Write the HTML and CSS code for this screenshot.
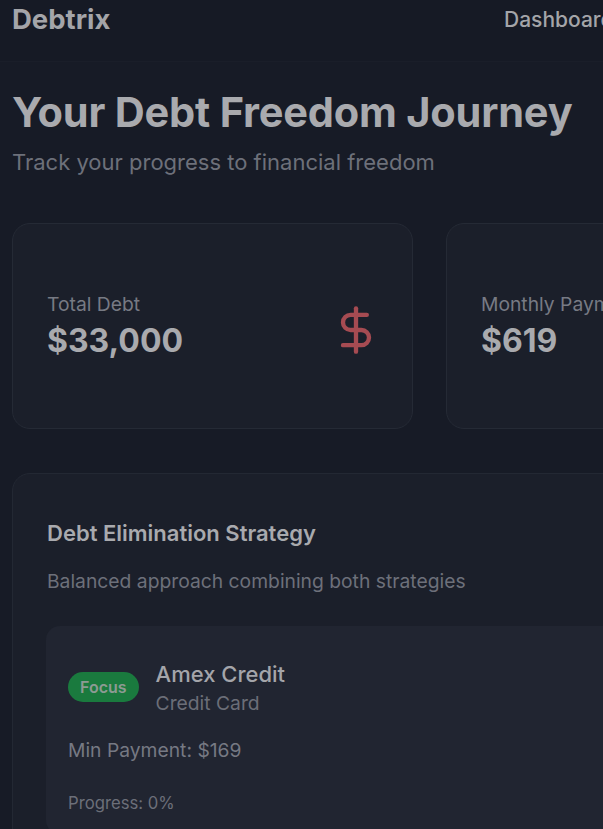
FILE: index.html
```html
<!DOCTYPE html>
<html lang="en">
<head>
<meta charset="utf-8">
<title>Debtrix</title>
<link rel="stylesheet" href="styles.css">
</head>
<body>
<div class="page">
  <header class="topbar">
    <div class="brand">Debtrix</div>
    <nav class="nav"><a class="nav-link">Dashboard</a><a class="nav-link">Debts</a><a class="nav-link">Plan</a></nav>
  </header>
  <main class="main">
    <h1 class="title">Your Debt Freedom Journey</h1>
    <p class="subtitle">Track your progress to financial freedom</p>

    <section class="stats">
      <div class="stat-card">
        <div class="stat-text">
          <div class="stat-label">Total Debt</div>
          <div class="stat-value">$33,000</div>
        </div>
        <svg class="stat-icon" width="52" height="52" viewBox="0 0 24 24" fill="none" stroke="currentColor" stroke-width="2" stroke-linecap="round" stroke-linejoin="round"><line x1="12" y1="2" x2="12" y2="22"/><path d="M17 5H9.5a3.5 3.5 0 0 0 0 7h5a3.5 3.5 0 0 1 0 7H6"/></svg>
      </div>
      <div class="stat-card">
        <div class="stat-text">
          <div class="stat-label">Monthly Payment</div>
          <div class="stat-value">$619</div>
        </div>
      </div>
      <div class="stat-card">
        <div class="stat-text">
          <div class="stat-label">Debt Free Date</div>
          <div class="stat-value">2029</div>
        </div>
      </div>
    </section>

    <section class="strategy">
      <h2 class="strategy-title">Debt Elimination Strategy</h2>
      <p class="strategy-desc">Balanced approach combining both strategies</p>
      <div class="debt-item">
        <div class="debt-head">
          <span class="badge">Focus</span>
          <div class="debt-name-block">
            <div class="debt-name">Amex Credit</div>
            <div class="debt-type">Credit Card</div>
          </div>
        </div>
        <div class="debt-min">Min Payment: $169</div>
        <div class="debt-progress">Progress: 0%</div>
      </div>
    </section>
  </main>
</div>
</body>
</html>
```

FILE: styles.css
```css
html, body {
  margin: 0;
  padding: 0;
  overflow: hidden;
  background: #171b26;
}
body {
  font-family: Inter, "Noto Sans", "Liberation Sans", sans-serif;
  color: #a9aaae;
}
.page {
  width: 1400px;
}
.topbar {
  height: 62px;
  box-sizing: border-box;
  display: flex;
  align-items: flex-start;
  padding: 2px 12px 0 12px;
  border-bottom: 1px solid #1a1e29;
  background: #161a25;
}
.brand {
  font-size: 27.5px;
  font-weight: 700;
  color: #a4a5a9;
  line-height: 34px;
  width: 492px;
}
.nav {
  display: flex;
  gap: 32px;
}
.nav-link {
  font-size: 21px;
  font-weight: 500;
  color: #a4a5a9;
  line-height: 36px;
}
.main {
  padding: 0 12px;
}
.title {
  margin: 26px 0 0 0;
  font-size: 41.5px;
  font-weight: 700;
  line-height: 48px;
  color: #a9aaae;
  letter-spacing: -0.2px;
}
.subtitle {
  margin: 11px 0 0 0;
  font-size: 22px;
  line-height: 30px;
  color: #6d707a;
}
.stats {
  margin-top: 46px;
  display: grid;
  grid-template-columns: 401px 401px 401px;
  gap: 33px;
}
.stat-card {
  box-sizing: border-box;
  height: 206px;
  padding: 0 34px;
  border: 1px solid #252a35;
  border-radius: 18px;
  background: #1b1f2a;
  display: flex;
  align-items: center;
  justify-content: space-between;
}
.stat-label {
  font-size: 19.3px;
  line-height: 26px;
  color: #777a84;
}
.stat-value {
  margin-top: 4px;
  font-size: 32px;
  font-weight: 700;
  line-height: 40px;
  color: #a9aaae;
}
.stat-icon {
  color: #a64b52;
  margin-right: -4px;
  margin-top: 8px;
}
.strategy {
  margin-top: 44px;
  box-sizing: border-box;
  width: 1300px;
  padding: 44px 34px 40px 34px;
  border: 1px solid #232833;
  border-radius: 18px;
  background: #1b1f2a;
}
.strategy-title {
  margin: 0;
  font-size: 22px;
  font-weight: 600;
  line-height: 30px;
  color: #a9aaae;
}
.strategy-desc {
  margin: 20px 0 0 0;
  font-size: 19.3px;
  line-height: 26px;
  color: #6d707a;
}
.debt-item {
  margin-top: 32px;
  margin-left: -1px;
  padding: 32px 22px 20px 22px;
  border-radius: 14px;
  background: #212531;
}
.debt-head {
  display: flex;
  align-items: center;
  gap: 17px;
}
.badge {
  display: inline-block;
  height: 30px;
  line-height: 30px;
  padding: 0 12px;
  border-radius: 15px;
  background: #1a7a3e;
  color: #8d9a93;
  font-size: 16px;
  font-weight: 600;
}
.debt-name {
  font-size: 22px;
  font-weight: 500;
  line-height: 32px;
  color: #a4a5aa;
}
.debt-type {
  font-size: 19.3px;
  line-height: 26px;
  color: #6b6e78;
}
.debt-min {
  margin-top: 21px;
  font-size: 19.3px;
  line-height: 26px;
  color: #767983;
}
.debt-progress {
  margin-top: 29px;
  font-size: 16.7px;
  line-height: 22px;
  color: #6c6f79;
}
```
